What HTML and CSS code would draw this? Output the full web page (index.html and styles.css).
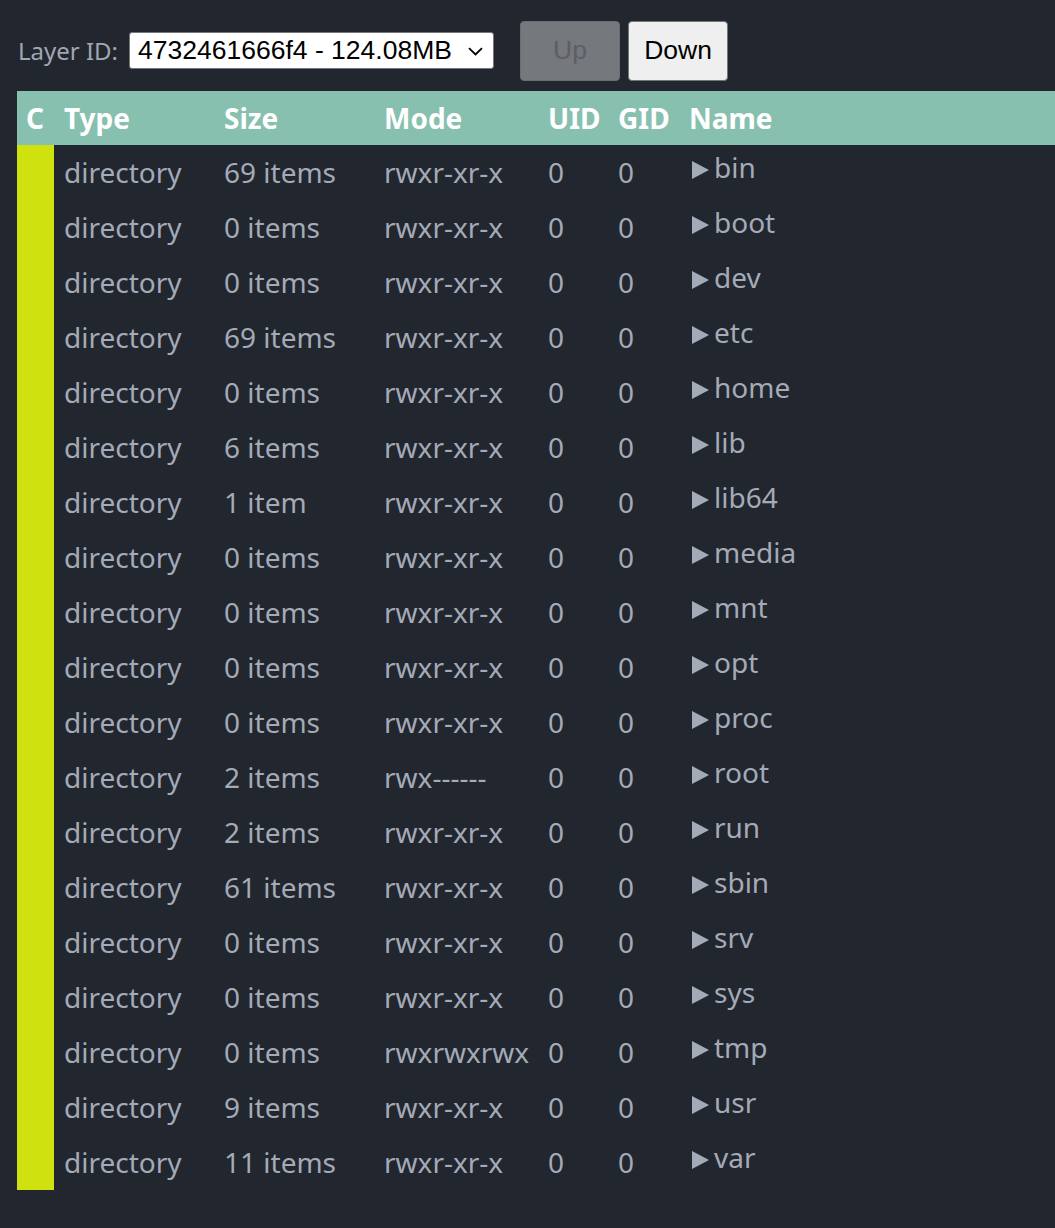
FILE: index.html
```html
<!DOCTYPE html>
<html>
<head>
<meta charset="utf-8">
<link rel="stylesheet" href="styles.css">
</head>
<body>
<div class="controls">
  <label class="layer-label">Layer ID:</label>
  <div class="select"><span>4732461666f4 - 124.08MB</span><svg class="chev" width="15" height="9" viewBox="0 0 15 9"><path d="M1 1.2 L7.5 7.5 L14 1.2" fill="none" stroke="#000" stroke-width="1.8"/></svg></div>
  <button class="btn btn-up" disabled>Up</button>
  <button class="btn btn-down">Down</button>
</div>
<div class="table">
  <div class="row head">
    <div class="c">C</div><div>Type</div><div>Size</div><div>Mode</div><div>UID</div><div>GID</div><div>Name</div>
  </div>
  <div class="row"><div class="c bar"></div><div>directory</div><div>69 items</div><div>rwxr-xr-x</div><div>0</div><div>0</div><div class="name"><svg class="tri" viewBox="0 0 17 18"><polygon points="0,0 17,9 0,18"/></svg>bin</div></div>
  <div class="row"><div class="c bar"></div><div>directory</div><div>0 items</div><div>rwxr-xr-x</div><div>0</div><div>0</div><div class="name"><svg class="tri" viewBox="0 0 17 18"><polygon points="0,0 17,9 0,18"/></svg>boot</div></div>
  <div class="row"><div class="c bar"></div><div>directory</div><div>0 items</div><div>rwxr-xr-x</div><div>0</div><div>0</div><div class="name"><svg class="tri" viewBox="0 0 17 18"><polygon points="0,0 17,9 0,18"/></svg>dev</div></div>
  <div class="row"><div class="c bar"></div><div>directory</div><div>69 items</div><div>rwxr-xr-x</div><div>0</div><div>0</div><div class="name"><svg class="tri" viewBox="0 0 17 18"><polygon points="0,0 17,9 0,18"/></svg>etc</div></div>
  <div class="row"><div class="c bar"></div><div>directory</div><div>0 items</div><div>rwxr-xr-x</div><div>0</div><div>0</div><div class="name"><svg class="tri" viewBox="0 0 17 18"><polygon points="0,0 17,9 0,18"/></svg>home</div></div>
  <div class="row"><div class="c bar"></div><div>directory</div><div>6 items</div><div>rwxr-xr-x</div><div>0</div><div>0</div><div class="name"><svg class="tri" viewBox="0 0 17 18"><polygon points="0,0 17,9 0,18"/></svg>lib</div></div>
  <div class="row"><div class="c bar"></div><div>directory</div><div>1 item</div><div>rwxr-xr-x</div><div>0</div><div>0</div><div class="name"><svg class="tri" viewBox="0 0 17 18"><polygon points="0,0 17,9 0,18"/></svg>lib64</div></div>
  <div class="row"><div class="c bar"></div><div>directory</div><div>0 items</div><div>rwxr-xr-x</div><div>0</div><div>0</div><div class="name"><svg class="tri" viewBox="0 0 17 18"><polygon points="0,0 17,9 0,18"/></svg>media</div></div>
  <div class="row"><div class="c bar"></div><div>directory</div><div>0 items</div><div>rwxr-xr-x</div><div>0</div><div>0</div><div class="name"><svg class="tri" viewBox="0 0 17 18"><polygon points="0,0 17,9 0,18"/></svg>mnt</div></div>
  <div class="row"><div class="c bar"></div><div>directory</div><div>0 items</div><div>rwxr-xr-x</div><div>0</div><div>0</div><div class="name"><svg class="tri" viewBox="0 0 17 18"><polygon points="0,0 17,9 0,18"/></svg>opt</div></div>
  <div class="row"><div class="c bar"></div><div>directory</div><div>0 items</div><div>rwxr-xr-x</div><div>0</div><div>0</div><div class="name"><svg class="tri" viewBox="0 0 17 18"><polygon points="0,0 17,9 0,18"/></svg>proc</div></div>
  <div class="row"><div class="c bar"></div><div>directory</div><div>2 items</div><div>rwx------</div><div>0</div><div>0</div><div class="name"><svg class="tri" viewBox="0 0 17 18"><polygon points="0,0 17,9 0,18"/></svg>root</div></div>
  <div class="row"><div class="c bar"></div><div>directory</div><div>2 items</div><div>rwxr-xr-x</div><div>0</div><div>0</div><div class="name"><svg class="tri" viewBox="0 0 17 18"><polygon points="0,0 17,9 0,18"/></svg>run</div></div>
  <div class="row"><div class="c bar"></div><div>directory</div><div>61 items</div><div>rwxr-xr-x</div><div>0</div><div>0</div><div class="name"><svg class="tri" viewBox="0 0 17 18"><polygon points="0,0 17,9 0,18"/></svg>sbin</div></div>
  <div class="row"><div class="c bar"></div><div>directory</div><div>0 items</div><div>rwxr-xr-x</div><div>0</div><div>0</div><div class="name"><svg class="tri" viewBox="0 0 17 18"><polygon points="0,0 17,9 0,18"/></svg>srv</div></div>
  <div class="row"><div class="c bar"></div><div>directory</div><div>0 items</div><div>rwxr-xr-x</div><div>0</div><div>0</div><div class="name"><svg class="tri" viewBox="0 0 17 18"><polygon points="0,0 17,9 0,18"/></svg>sys</div></div>
  <div class="row"><div class="c bar"></div><div>directory</div><div>0 items</div><div>rwxrwxrwx</div><div>0</div><div>0</div><div class="name"><svg class="tri" viewBox="0 0 17 18"><polygon points="0,0 17,9 0,18"/></svg>tmp</div></div>
  <div class="row"><div class="c bar"></div><div>directory</div><div>9 items</div><div>rwxr-xr-x</div><div>0</div><div>0</div><div class="name"><svg class="tri" viewBox="0 0 17 18"><polygon points="0,0 17,9 0,18"/></svg>usr</div></div>
  <div class="row"><div class="c bar"></div><div>directory</div><div>11 items</div><div>rwxr-xr-x</div><div>0</div><div>0</div><div class="name"><svg class="tri" viewBox="0 0 17 18"><polygon points="0,0 17,9 0,18"/></svg>var</div></div>
</div>
</body>
</html>
```
FILE: styles.css
```css
html, body {
  margin: 0;
  padding: 0;
  background: #22262e;
}
body {
  padding: 21px 0 0 17px;
  font-family: "Noto Sans", sans-serif;
  color: #a4aab7;
  min-height: 1228px;
  box-sizing: border-box;
}
.controls {
  display: flex;
  align-items: center;
  height: 59px;
  margin-bottom: 11px;
}
.layer-label {
  font-size: 24px;
  color: #a0a6b3;
  margin-left: 1px;
  margin-right: 11px;
}
.select {
  display: flex;
  align-items: center;
  justify-content: space-between;
  box-sizing: border-box;
  width: 365px;
  height: 37px;
  background: #fff;
  border: 1px solid #767676;
  border-radius: 3px;
  padding: 0 10px 0 8px;
  font-family: "Liberation Sans", Arial, sans-serif;
  font-size: 26.5px;
  color: #000;
}
.chev { margin-top: 2px; }
.btn {
  box-sizing: border-box;
  width: 100px;
  height: 60px;
  border-radius: 4px;
  font-family: "Liberation Sans", Arial, sans-serif;
  font-size: 26.5px;
  padding: 0;
}
.btn-up {
  margin-left: 26px;
  background: #75787c;
  border: 1px solid #6a6d72;
  color: #5c5f64;
}
.btn-down {
  margin-left: 8px;
  background: #efefef;
  border: 1px solid #767676;
  color: #000;
}
.table {
  width: 1038px;
}
.row {
  display: grid;
  grid-template-columns: 37px 160px 160px 164px 70px 71px 1fr;
  height: 55px;
  font-size: 28px;
}
.row > div {
  padding-left: 10px;
  line-height: 55px;
  white-space: nowrap;
}
.row.head {
  background: #88c0af;
  color: #fff;
  font-weight: bold;
  height: 54px;
}
.row.head > div { line-height: 54px; }
.row > .c { padding-left: 9px; }
.row > .bar { background: #cfe10e; }
.row > .name {
  line-height: 45px;
  padding-left: 13px;
}
.tri {
  width: 17px;
  height: 18px;
  fill: #a4aab7;
  margin-right: 5px;
  vertical-align: -1px;
}
```
